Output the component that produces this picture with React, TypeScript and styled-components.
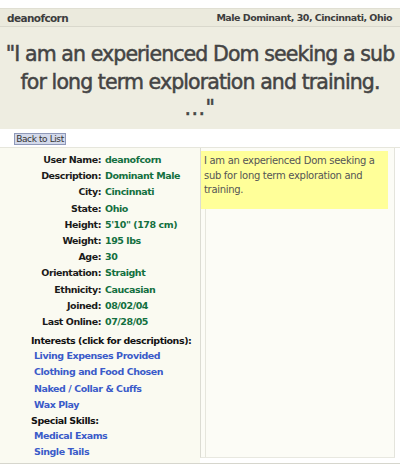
import React from 'react';
import styled, { createGlobalStyle } from 'styled-components';

const Global = createGlobalStyle`
	body {
		margin: 0;
		background: #ffffff;
		font-family: 'DejaVu Sans', Verdana, sans-serif;
	}
`;

const Page = styled.div`
	width: 400px;
	height: 468px;
	padding-top: 8px;
	box-sizing: border-box;
	overflow: hidden;
`;

const Header = styled.div`
	height: 17px;
	display: flex;
	align-items: center;
	justify-content: space-between;
	padding: 0 8px 0 7px;
	background: #ebeadd;
	border-top: 1px solid #e0dfd3;
	border-bottom: 1px solid #d9d8cc;
	font-size: 10.5px;
	font-weight: bold;
	letter-spacing: -0.6px;
	color: #3d3d3d;
`;

const Detail = styled.span`
	font-size: 9.5px;
	letter-spacing: -0.5px;
`;

const Quote = styled.div`
	height: 102px;
	display: flex;
	align-items: center;
	justify-content: center;
	text-align: center;
	background: #eeede1;
	color: #444;
	font-size: 20.5px;
	letter-spacing: -0.9px;
	line-height: 28px;
	padding: 3px 2px 0;
	box-sizing: border-box;
	-webkit-text-stroke: 0.5px #444;
`;

const QuoteTail = styled.span`
	display: block;
	letter-spacing: 0.5px;
	line-height: 24px;
`;

const NavStrip = styled.div`
	height: 18px;
	padding: 4px 0 0 14px;
	background: #ffffff;
	box-sizing: border-box;
`;

const BackButton = styled.button`
	display: block;
	height: 12px;
	width: 52px;
	padding: 0;
	font-family: 'DejaVu Sans', Verdana, sans-serif;
	font-size: 9px;
	letter-spacing: -0.4px;
	color: #333;
	background: #d3d9ea;
	border: 1px solid #8f99b9;
	line-height: 10px;
`;

const Content = styled.div`
	display: grid;
	grid-template-columns: 200px 1fr;
	height: 317px;
	border-top: 1px solid #e6e6dc;
	border-bottom: 1px solid #d6d6cd;
	box-sizing: border-box;
`;

const LeftCol = styled.div`
	background: #fafaf1;
	padding-top: 4px;
`;

const RightCol = styled.div`
	background: #fcfcf6;
	border-left: 1px solid #dcdcd3;
	border-right: 1px solid #e4e4dc;
	border-bottom: 1px solid #e8e8e0;
	margin: 0 5px 5px 0;
	padding: 3px 6px 0 0;
	position: relative;
`;

const InnerLine = styled.div`
	position: absolute;
	left: 4px;
	top: 58px;
	bottom: 0;
	border-left: 1px solid #e6e6dd;
`;

const Fields = styled.div`
	display: grid;
	grid-template-columns: 101px 1fr;
	column-gap: 4px;
	font-size: 9.5px;
	letter-spacing: -0.45px;
	line-height: 16.2px;
	font-weight: bold;
`;

const Label = styled.div`
	text-align: right;
	color: #1a1a1a;
`;

const Value = styled.div`
	color: #137040;
`;

const Section = styled.div`
	padding: 3px 0 0 31px;
	font-size: 9.5px;
	letter-spacing: -0.45px;
	font-weight: bold;
	color: #111;
`;

const SectionTitle = styled.div`
	line-height: 15px;
`;

const LinkItem = styled.div`
	padding-left: 3px;
	line-height: 16.2px;
	color: #3a5bc9;
`;

const Bio = styled.div`
	background: #ffff99;
	color: #555;
	font-size: 10px;
	letter-spacing: -0.3px;
	line-height: 14.5px;
	padding: 3px 4px 11px 3px;
	position: relative;
`;

const fields: [string, string][] = [
	['User Name:', 'deanofcorn'],
	['Description:', 'Dominant Male'],
	['City:', 'Cincinnati'],
	['State:', 'Ohio'],
	['Height:', '5\'10" (178 cm)'],
	['Weight:', '195 lbs'],
	['Age:', '30'],
	['Orientation:', 'Straight'],
	['Ethnicity:', 'Caucasian'],
	['Joined:', '08/02/04'],
	['Last Online:', '07/28/05'],
];

const interests = ['Living Expenses Provided', 'Clothing and Food Chosen', 'Naked / Collar & Cuffs', 'Wax Play'];
const skills = ['Medical Exams', 'Single Tails'];

export default function App() {
	return (
		<Page>
			<Global />
			<Header>
				<span>deanofcorn</span>
				<Detail>Male Dominant, 30, Cincinnati, Ohio</Detail>
			</Header>
			<Quote>
				<div>
					"I am an experienced Dom seeking a sub for long term exploration and training.
					<QuoteTail>..."</QuoteTail>
				</div>
			</Quote>
			<NavStrip>
				<BackButton>Back to List</BackButton>
			</NavStrip>
			<Content>
				<LeftCol>
					<Fields>
						{fields.map(([k, v]) => (
							<React.Fragment key={k}>
								<Label>{k}</Label>
								<Value>{v}</Value>
							</React.Fragment>
						))}
					</Fields>
					<Section>
						<SectionTitle>Interests (click for descriptions):</SectionTitle>
						{interests.map((i) => (
							<LinkItem key={i}>{i}</LinkItem>
						))}
						<SectionTitle>Special Skills:</SectionTitle>
						{skills.map((s) => (
							<LinkItem key={s}>{s}</LinkItem>
						))}
					</Section>
				</LeftCol>
				<RightCol>
					<InnerLine />
					<Bio>I am an experienced Dom seeking a sub for long term exploration and training.</Bio>
				</RightCol>
			</Content>
		</Page>
	);
}
